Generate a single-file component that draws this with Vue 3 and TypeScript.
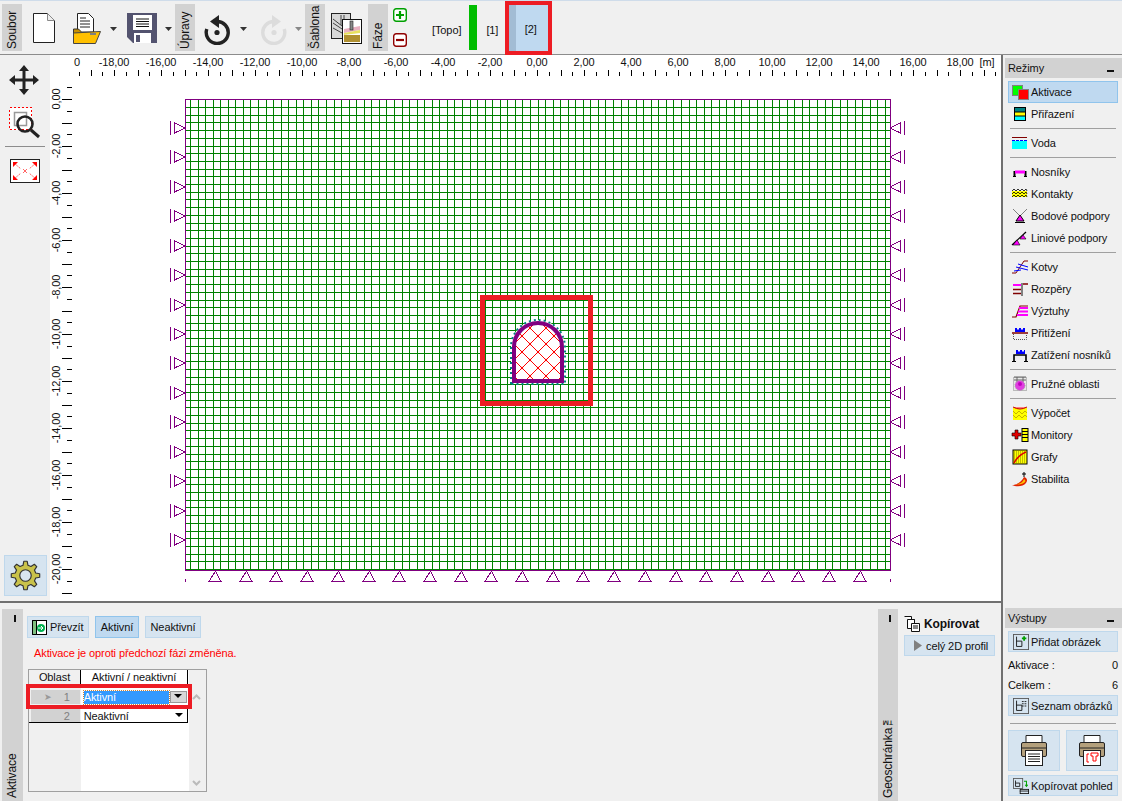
<script setup lang="ts">
interface ModeItem {
  label?: string;
  icon?: string;
  active?: boolean;
}

const modes: ModeItem[] = [
  {
    label: "Aktivace",
    active: true,
    icon: '<rect x="1.5" y="1.5" width="10" height="10" fill="#00ff00" stroke="#808080"/><rect x="7.5" y="5.5" width="10" height="10" fill="#ff0000" stroke="#808080"/>',
  },
  {
    label: "Přiřazení",
    icon: '<rect x="3.5" y="1.5" width="11" height="13" fill="#008080" stroke="#000"/><rect x="4" y="6" width="10" height="4" fill="#ffff00"/><rect x="4" y="10" width="10" height="4" fill="#00ffff"/><path d="M4 10h10M4 6h10" stroke="#000"/>',
  },
  {},
  {
    label: "Voda",
    icon: '<path d="M1 2.500h15" stroke="#800000"/><rect x="1" y="6" width="15" height="8" fill="#00ffff"/><path d="M1 5.500h15" stroke="#0000ff" stroke-dasharray="3 1"/>',
  },
  {},
  {
    label: "Nosníky",
    icon: '<path d="M3.500 12V8h11v4" fill="none" stroke="#000" stroke-width="2"/><rect x="4" y="6.500" width="10" height="3" fill="#ff00ff"/><path d="M2 12.500h3M13 12.500h3" stroke="#000"/>',
  },
  {
    label: "Kontakty",
    icon: '<rect x="1" y="5" width="15" height="6" fill="#ffff00"/><path d="M1 5l2-2 2 2 2-2 2 2 2-2 2 2 2-2 1 2M1 8l2-2 2 2 2-2 2 2 2-2 2 2 2-2 1 2M1 11l2-2 2 2 2-2 2 2 2-2 2 2 2-2 1 2" fill="none" stroke="#000" stroke-width=".8"/>',
  },
  {
    label: "Bodové podpory",
    icon: '<path d="M2 1l7 7M16 1L9 8" stroke="#808080"/><path d="M9 7l4 6H5z" fill="#ff00ff" stroke="#000"/><path d="M4 14.500h10" stroke="#000"/>',
  },
  {
    label: "Liniové podpory",
    icon: '<path d="M1 15L15 2" stroke="#000" stroke-width="1.200"/><path d="M12 5l3 4H9zM6 10l3 5H2z" fill="#ff00ff" stroke="#000" stroke-width=".6"/>',
  },
  {},
  {
    label: "Kotvy",
    icon: '<path d="M1 14h4l8-12h4" fill="none" stroke="#800000"/><path d="M5 8l12 3M7 5l10 3M3 12l7-1" stroke="#0000ff" fill="none"/>',
  },
  {
    label: "Rozpěry",
    icon: '<rect x="2" y="3" width="9" height="2" fill="#ff00ff"/><path d="M2 8.500h8M2 12.500h8M12 3h5" stroke="#800000" stroke-width="1.600"/><rect x="10" y="2" width="2" height="13" fill="#808080"/>',
  },
  {
    label: "Výztuhy",
    icon: '<path d="M1 14h4l4-11h8" fill="none" stroke="#800000" stroke-width="1.200"/><path d="M8 5h9M7 8.500h10M6 12h11" stroke="#ff00ff" stroke-width="1.800"/>',
  },
  {
    label: "Přitížení",
    icon: '<path d="M4 7V3h2v1.500h2V3h2v1.500h2V3h2v4z" fill="#0000ff"/><path d="M1 8h16" stroke="#800000" stroke-width="1.500"/><path d="M2.500 9v5.500h13V9" fill="none" stroke="#555" stroke-dasharray="1 1"/>',
  },
  {
    label: "Zatížení nosníků",
    icon: '<path d="M5 7V3h2v1.500h2V3h2v1.500h2V3h1v4z" fill="#0000ff"/><path d="M3 14V8h12v6" fill="none" stroke="#000" stroke-width="1.600"/><path d="M1 14.500h4M13 14.500h4" stroke="#000"/>',
  },
  {},
  {
    label: "Pružné oblasti",
    icon: '<rect x="2.500" y="1.500" width="13" height="13" fill="#e8e8e8" stroke="#888" stroke-dasharray="1 1"/><path d="M3 1h12M6 1v5M12 1v5M3 4h12" stroke="#666" fill="none"/><ellipse cx="9" cy="9.500" rx="5" ry="5" fill="#e040e0" stroke="#a0a0a0" stroke-dasharray="1 1"/><circle cx="9" cy="8" r="2" fill="#c000c0"/>',
  },
  {},
  {
    label: "Výpočet",
    icon: '<rect x="2" y="3" width="14" height="12" fill="#ffff00"/><path d="M2 6l3 3 3-3 3 3 3-3 2 2M2 10l3 3 3-3 3 3 3-3 2 2" stroke="#a08000" stroke-width=".6" fill="none"/><path d="M2 2q7 4 14 0" fill="#ff8080" stroke="#c00000"/>',
  },
  {
    label: "Monitory",
    icon: '<path d="M3 6h3V3h3v3h3v3H9v3H6V9H3z" fill="#e00000" stroke="#000" stroke-width=".6" transform="translate(-2 0)"/><rect x="11" y="1.500" width="6" height="13" fill="#ffff00" stroke="#000"/><path d="M11 4.500h6M11 7.500h6M11 10.500h6" stroke="#000"/>',
  },
  {
    label: "Grafy",
    icon: '<rect x="2" y="1" width="14" height="14" fill="#ffff00" stroke="#000"/><path d="M3 3h12M3 5h12M3 7h12M3 9h12M3 11h12M3 13h12" stroke="#000" stroke-width=".5" stroke-dasharray="1 1"/><path d="M3 14C6 8 10 5 15 3" fill="none" stroke="#e00000" stroke-width="1.600"/>',
  },
  {
    label: "Stabilita",
    icon: '<path d="M1 14C7 14 11 10 13 6c3 1 4 3 2 6-3 4-10 4-14 2z" fill="#e02000"/><path d="M5 13c4 0 7-2 8-5 1 1 2 2 1 3-2 2-6 3-9 2z" fill="#ffc000"/><path d="M13 6V1M11 3h4" stroke="#000"/>',
  },
];

const X0 = 537;
const Y0 = 99;
const PX_PER_M = 23.5;

function fmt(v: number): string {
  return v.toFixed(2).replace(".", ",").replace("-0,00", "0,00");
}

const topLabels: { x: number; text: string }[] = [];
for (let v = -18; v <= 18; v += 2) {
  topLabels.push({ x: X0 + v * PX_PER_M, text: fmt(v) });
}
const leftLabels: { y: number; text: string }[] = [];
for (let v = 0; v <= 20; v += 2) {
  leftLabels.push({ y: Y0 + v * PX_PER_M, text: fmt(-v) });
}

let topTicks = "";
for (let i = -39; i <= 39; i++) {
  const x = Math.round(X0 + i * 0.5 * PX_PER_M) + 0.5;
  topTicks += `M${x} ${i % 2 === 0 ? 70 : 72}V76`;
}
let leftTicks = "";
for (let i = -1; i <= 42; i++) {
  const y = Math.round(Y0 + i * 0.5 * PX_PER_M) + 0.5;
  leftTicks += `M${i % 2 === 0 ? 62 : 67} ${y}H72`;
}

let meshPath = "";
for (let i = 0; i <= 92; i++) {
  const x = Math.round(190 + (i * 695) / 92) + 0.5;
  meshPath += `M${x} 99V570`;
}
for (let i = 0; i <= 60; i++) {
  const y = Math.round(107 + i * 7.7) + 0.5;
  meshPath += `M185 ${y}H890`;
}

const leftSupports: number[] = [];
for (let i = 0; i < 15; i++) leftSupports.push(Math.round(128 + i * 29.43));
const bottomSupports: number[] = [];
for (let i = 0; i < 22; i++) bottomSupports.push(Math.round(215 + i * 30.7));

// sit liniove oblasti v tunelu
let latticePath = "";
const latticeNodes: { x: number; y: number }[] = [];
for (let c = -10; c <= 10; c++) {
  latticePath += `M${538 + c * 16 - 80} 272L${538 + c * 16 + 120} 472`;
  latticePath += `M${538 + c * 16 + 80} 272L${538 + c * 16 - 120} 472`;
}
for (let r = 0; r < 9; r++) {
  for (let c = -2; c <= 2; c++) {
    latticeNodes.push({ x: 538 + c * 16 + (r % 2 ? 8 : 0), y: 320 + r * 8 });
  }
}

const TUNNEL = "M514 381V347A24 24 0 0 1 562 347V381Z";
const TUNNEL_OUTER = "M511 384V347A27 27 0 0 1 565 347V384Z";

function gearPath(cx: number, cy: number, teeth: number, ro: number, ri: number): string {
  let d = "";
  const step = (Math.PI * 2) / teeth;
  for (let i = 0; i < teeth; i++) {
    const a = i * step - Math.PI / 2;
    for (const [ang, r] of [
      [a - step * 0.3, ri],
      [a - step * 0.15, ro],
      [a + step * 0.15, ro],
      [a + step * 0.3, ri],
    ]) {
      const x = (cx + Math.cos(ang) * r).toFixed(1);
      const y = (cy + Math.sin(ang) * r).toFixed(1);
      d += `${d ? "L" : "M"}${x} ${y}`;
    }
  }
  return d + "Z";
}
const gear = gearPath(21.5, 20.5, 8, 15, 11);
</script>

<template>
  <div class="app">
    <header class="toolbar">
      <div class="group">Soubor</div>
      <svg class="tool t-new" width="22" height="30" viewBox="0 0 22 30">
        <path d="M.5.5h14l7 7v22H.5z" fill="#fff" stroke="#222" />
        <path d="M14.500.5v7h7" fill="#eee" stroke="#888" />
      </svg>
      <svg class="tool t-open" width="28" height="31" viewBox="0 0 28 31">
        <path d="M4.500.5h11l5 5v18h-16z" fill="#fff" stroke="#222" />
        <path d="M7 5h6M7 8h10M7 11h10M7 14h10" stroke="#222" />
        <path d="M.5 16h5l3 3h13v4H.5z" fill="#c89000" stroke="#333" />
        <path d="M.5 30.500V20l27-1.500-5 12z" fill="#ffc000" stroke="#444" />
        <path d="M17 20h6v2h-6z" fill="#808080" />
      </svg>
      <svg class="arrow t-a1" width="7" height="4" viewBox="0 0 7 4"><path d="M0 0h7L3.500 4z" fill="#333" /></svg>
      <svg class="tool t-save" width="30" height="30" viewBox="0 0 30 30">
        <path d="M0 0h30v30H6l-6-6z" fill="#53536f" />
        <rect x="6" y="2" width="19" height="15" fill="#fff" />
        <path d="M9 6h13M9 8.500h13M9 11h13M9 13.500h13" stroke="#111" />
        <rect x="7" y="20" width="17" height="10" fill="#fff" />
        <rect x="9" y="22" width="4" height="7" fill="#53536f" />
      </svg>
      <svg class="arrow t-a2" width="7" height="4" viewBox="0 0 7 4"><path d="M0 0h7L3.500 4z" fill="#333" /></svg>
      <div class="group t-upravy">Úpravy</div>
      <svg class="tool t-undo" width="28" height="30" viewBox="0 0 28 30">
        <path d="M13 6.500A11 11 0 1 1 2.800 14" fill="none" stroke="#222" stroke-width="3.400" />
        <path d="M15 0v13L6 6.500z" fill="#222" />
        <circle cx="13" cy="17.500" r="2.600" fill="#222" />
      </svg>
      <svg class="arrow t-a3" width="7" height="4" viewBox="0 0 7 4"><path d="M0 0h7L3.500 4z" fill="#333" /></svg>
      <svg class="tool t-redo" width="28" height="30" viewBox="0 0 28 30">
        <path d="M15 6.500A11 11 0 1 0 25.200 14" fill="none" stroke="#dcdcdc" stroke-width="3.400" />
        <path d="M13 0v13l9-6.500z" fill="#dcdcdc" />
        <circle cx="15" cy="17.500" r="2.600" fill="#dcdcdc" />
      </svg>
      <svg class="arrow t-a4" width="7" height="4" viewBox="0 0 7 4"><path d="M0 0h7L3.500 4z" fill="#888" /></svg>
      <div class="group t-sablona">Šablona</div>
      <svg class="tool t-template" width="31" height="31" viewBox="0 0 31 31">
        <rect x=".5" y=".5" width="19" height="25" fill="#d8d8d8" stroke="#222" />
        <path d="M2 6l9 7M2 10l9 6M2 15l9 5M10 2v10M13 2v10" stroke="#444" />
        <rect x="11.500" y="6.500" width="19" height="24" fill="#fff" stroke="#111" />
        <path d="M13 16l16-3v4l-16 3z" fill="#e8b0c0" />
        <path d="M13 20l16-3v3l-16 2z" fill="#e8e060" />
        <rect x="13" y="22" width="16" height="7" fill="#b09030" />
        <rect x="19" y="8" width="3" height="9" fill="#888" stroke="#222" stroke-width=".6" />
      </svg>
      <div class="group t-faze">Fáze</div>
      <div class="phase-btns">
        <svg width="14" height="14" viewBox="0 0 14 14">
          <rect x=".7" y=".7" width="12.600" height="12.600" rx="2.500" fill="#fff" stroke="#00a000" stroke-width="1.400" />
          <path d="M7 3v8M3 7h8" stroke="#00a000" stroke-width="2.200" />
        </svg>
        <svg width="14" height="14" viewBox="0 0 14 14">
          <rect x=".7" y=".7" width="12.600" height="12.600" rx="2.500" fill="#fff" stroke="#900000" stroke-width="1.400" />
          <path d="M3 7h8" stroke="#900000" stroke-width="2.200" />
        </svg>
      </div>
      <span class="phase t-topo">[Topo]</span>
      <span class="phase-bar"></span>
      <span class="phase t-one">[1]</span>
      <div class="phase-active">
        <span class="phase-strip"></span>
        <span class="phase-label">[2]</span>
      </div>
    </header>

    <div class="body">
      <div class="main">
        <div class="work">
          <aside class="side-tools">
            <svg class="move" width="30" height="30" viewBox="0 0 30 30">
              <path d="M15 0l5 6h-3.500v7.500H24V10l6 5-6 5v-3.500h-7.500V24H20l-5 6-5-6h3.500v-7.500H6V20l-6-5 6-5v3.500h7.500V6H10z" fill="#222" />
            </svg>
            <svg class="zoom" width="32" height="32" viewBox="0 0 32 32">
              <rect x=".5" y=".5" width="22" height="22" fill="#fff" stroke="#f00" stroke-dasharray="2 2" shape-rendering="crispEdges" />
              <rect x="5.500" y="5.500" width="12" height="13" fill="none" stroke="#999" stroke-width="1.500" />
              <circle cx="16" cy="17" r="7.500" fill="none" stroke="#222" stroke-width="2.600" />
              <path d="M22 23l8 7" stroke="#222" stroke-width="3" />
            </svg>
            <div class="tool-sep"></div>
            <svg class="fit" width="30" height="24" viewBox="0 0 30 24">
              <rect x=".5" y=".5" width="29" height="23" fill="#fff" stroke="#222" />
              <path d="M4 4l7 6M26 4l-7 6M4 20l7-6M26 20l-7-6" stroke="#f66" stroke-dasharray="2 1" />
              <path d="M3 3h5L3 8zM27 3h-5l5 5zM3 21h5l-5-5zM27 21h-5l5-5z" fill="#f00" />
              <path d="M13 10l2 2 2-2M13 14l2-2 2 2" fill="none" stroke="#f66" />
            </svg>
            <button class="gear-btn">
              <svg width="43" height="41" viewBox="0 0 43 41">
                <path :d="gear" fill="#c9c24a" stroke="#333" stroke-width="1.200" stroke-linejoin="round" />
                <circle cx="21.500" cy="20.500" r="6" fill="#d8e5f0" stroke="#333" stroke-width="1.200" />
              </svg>
            </button>
          </aside>

          <div class="canvas">
            <svg width="951" height="546" viewBox="50 55 951 546">
              <g shape-rendering="crispEdges">
                <path :d="topTicks" stroke="#000" fill="none" />
                <path :d="leftTicks" stroke="#000" fill="none" />
                <path :d="meshPath" stroke="#008000" fill="none" />
                <rect x="185.500" y="99.500" width="705" height="471" fill="none" stroke="#800080" />
                <path d="M185 570.500H891" stroke="#800080" fill="none" />
              </g>
              <text class="rt" x="77" y="66" text-anchor="middle">0</text>
              <text
                v-for="l in topLabels"
                :key="l.text"
                class="rt"
                :x="l.x"
                y="66"
                text-anchor="middle"
              >{{ l.text }}</text>
              <text class="rt" x="987" y="66" text-anchor="middle">[m]</text>
              <text
                v-for="l in leftLabels"
                :key="l.text"
                class="rt"
                text-anchor="middle"
                :transform="`translate(60 ${l.y}) rotate(-90)`"
              >{{ l.text }}</text>

              <g fill="none" stroke="#800080" shape-rendering="crispEdges">
                <g v-for="y in leftSupports" :key="y">
                  <path :d="`M170.500 ${y - 7}V${y + 7}`" />
                  <path :d="`M174.500 ${y - 5}V${y + 5}L185 ${y}Z`" />
                  <path :d="`M904.500 ${y - 7}V${y + 7}`" />
                  <path :d="`M900.500 ${y - 5}V${y + 5}L890 ${y}Z`" />
                </g>
                <path
                  v-for="x in bottomSupports"
                  :key="x"
                  :d="`M${x + 0.5} 571L${x + 6} 581.500H${x - 6}Z`"
                />
                <path d="M185.500 579v3M890.500 579v3" />
              </g>

              <clipPath id="tunnel-clip"><path :d="TUNNEL" /></clipPath>
              <path :d="TUNNEL_OUTER" fill="#fff" stroke="#008080" stroke-width="2" stroke-dasharray="2 3" />
              <path :d="TUNNEL" fill="#fff" />
              <g clip-path="url(#tunnel-clip)">
                <path :d="latticePath" stroke="#ff0000" fill="none" />
                <circle v-for="n in latticeNodes" :key="`${n.x}-${n.y}`" :cx="n.x" :cy="n.y" r="1.200" fill="#ff0000" />
              </g>
              <path :d="TUNNEL" fill="none" stroke="#800080" stroke-width="4" />
              <rect x="482.500" y="297.500" width="108" height="106" fill="none" stroke="#ed1c24" stroke-width="5" />
            </svg>
          </div>
        </div>

        <section class="bottom">
          <div class="vtab t-aktivace">
            <span class="pin"></span>
            <span class="vtab-text">Aktivace</span>
          </div>
          <div class="activation">
            <div class="btn-row">
              <button class="btn b-take">
                <svg width="15" height="15" viewBox="0 0 15 15">
                  <rect x=".5" y=".5" width="14" height="14" fill="#fff" stroke="#000" />
                  <path d="M.5.500h4v14h-4z" fill="#80c080" stroke="#000" />
                  <circle cx="9" cy="8" r="4" fill="#00b050" />
                  <path d="M6 8h5M9 6l2 2-2 2" stroke="#fff" fill="none" />
                </svg>
                Převzít
              </button>
              <button class="btn b-on selected">Aktivní</button>
              <button class="btn b-off">Neaktivní</button>
            </div>
            <p class="warn">Aktivace je oproti předchozí fázi změněna.</p>
            <div class="table">
              <div class="thead">
                <div class="c-area">Oblast</div>
                <div class="c-state">Aktivní / neaktivní</div>
              </div>
              <div class="tr tr-first">
                <div class="rowhead"><span class="row-mark">➤</span>1</div>
                <div class="cell">
                  <span class="cell-value">Aktivní</span>
                  <span class="combo"></span>
                </div>
              </div>
              <div class="tr tr-last">
                <div class="rowhead">2</div>
                <div class="cell cell-plain">
                  <span>Neaktivní</span>
                  <span class="combo-arrow"></span>
                </div>
              </div>
              <svg class="scroll scroll-up" width="9" height="6" viewBox="0 0 9 6"><path d="M1 5l3.500-3.500L8 5" fill="none" stroke="#bbb" stroke-width="2" /></svg>
              <svg class="scroll scroll-down" width="9" height="6" viewBox="0 0 9 6"><path d="M1 1l3.500 3.500L8 1" fill="none" stroke="#bbb" stroke-width="2" /></svg>
              <div class="row-highlight"></div>
            </div>
          </div>
          <div class="vtab t-geo">
            <span class="pin"></span>
            <span class="vtab-text">Geoschránka™</span>
          </div>
          <div class="copy">
            <div class="copy-title">
              <svg width="16" height="16" viewBox="0 0 16 16">
                <path d="M.5.500h7v3h3v3" fill="#fff" stroke="#111" />
                <path d="M3.500 3.500h7v9h-7z" fill="#fff" stroke="#111" />
                <path d="M7.500 7.500h8v8h-8z" fill="#fff" stroke="#111" />
                <path d="M9 10h5M9 12h5" stroke="#111" />
              </svg>
              <b>Kopírovat</b>
            </div>
            <button class="btn copy-btn">
              <svg width="8" height="11" viewBox="0 0 8 11"><path d="M0 0l8 5.500L0 11z" fill="#808080" /></svg>
              celý 2D profil
            </button>
          </div>
        </section>
      </div>

      <aside class="right">
        <div class="panel-head"><span>Režimy</span><i class="dash"></i></div>
        <nav class="modes">
          <template v-for="(m, i) in modes" :key="i">
            <div v-if="m.label" class="mode" :class="{ active: m.active }">
              <svg width="18" height="16" viewBox="0 0 18 16" v-html="m.icon"></svg>
              <span>{{ m.label }}</span>
            </div>
            <div v-else class="sep"></div>
          </template>
        </nav>
        <div class="spacer"></div>
        <div class="panel-head"><span>Výstupy</span><i class="dash"></i></div>
        <div class="outputs">
          <button class="btn out-btn">
            <svg width="16" height="16" viewBox="0 0 18 18">
              <rect x=".5" y=".5" width="17" height="17" fill="none" stroke="#555" />
              <path d="M4 3v11h6V8H4" fill="none" stroke="#111" />
              <path d="M10 5h5M12.500 2.500v5" stroke="#00a000" stroke-width="2" />
            </svg>
            Přidat obrázek
          </button>
          <div class="stat stat-first"><span>Aktivace :</span><span>0</span></div>
          <div class="stat"><span>Celkem :</span><span>6</span></div>
          <button class="btn out-btn">
            <svg width="16" height="16" viewBox="0 0 18 18">
              <rect x=".5" y=".5" width="17" height="17" fill="none" stroke="#555" />
              <path d="M4 3v11h6V8H4" fill="none" stroke="#111" />
              <path d="M10 4h5M10 6.500h5M10 9h5" stroke="#111" stroke-dasharray="2 1" />
            </svg>
            Seznam obrázků
          </button>
          <div class="out-sep"></div>
          <div class="print-row">
            <button class="btn print-btn">
              <svg width="26" height="31" viewBox="0 0 26 31">
                <path d="M5 .5h16v8H5z" fill="#fff" stroke="#222" />
                <rect x=".5" y="7.500" width="25" height="14" rx="1.500" fill="#b4a07c" stroke="#222" />
                <path d="M1 13h24" stroke="#222" />
                <rect x="4.500" y="15.500" width="17" height="15" fill="#fff" stroke="#222" />
                <path d="M7 19h12M7 21.500h12M7 24h12M7 26.500h12" stroke="#222" />
              </svg>
            </button>
            <button class="btn print-btn">
              <svg width="26" height="31" viewBox="0 0 26 31">
                <path d="M5 .5h16v8H5z" fill="#fff" stroke="#222" />
                <rect x=".5" y="7.500" width="25" height="14" rx="1.500" fill="#b4a07c" stroke="#222" />
                <path d="M1 13h24" stroke="#222" />
                <rect x="4.500" y="15.500" width="17" height="15" fill="#fff" stroke="#222" />
                <path d="M8 19v8M8 19h2M8 27h2M12 18h7v3h-2v5h-3v-5h-2z" fill="none" stroke="#f00" />
              </svg>
            </button>
          </div>
          <button class="btn out-btn">
            <svg width="16" height="16" viewBox="0 0 19 19">
              <rect x=".5" y=".5" width="11" height="12" fill="none" stroke="#555" />
              <path d="M3 3v7h5V6H3" fill="none" stroke="#111" />
              <path d="M13 4h3v5M14.500 8l1.500 2 1.500-2" fill="none" stroke="#00a000" stroke-width="1.200" />
              <rect x="8.500" y="13.500" width="10" height="5" fill="none" stroke="#111" />
              <path d="M8 15.500h11" stroke="#111" />
            </svg>
            Kopírovat pohled
          </button>
        </div>
      </aside>
    </div>
  </div>
</template>

<style>
html,
body {
  margin: 0;
  background: #f0f0f0;
}
</style>

<style scoped>
.app {
  width: 1122px;
  height: 801px;
  overflow: hidden;
  background: #f0f0f0;
  color: #111;
  font: 11px "Liberation Sans", Arial, sans-serif;
  letter-spacing: -0.1px;
}

.toolbar {
  height: 52px;
  padding: 1px 0 0 2px;
  display: flex;
  align-items: flex-start;
  border-top: 1px solid #cfdcea;
  border-bottom: 1px solid #8c8c8c;
}

.group {
  width: 20px;
  height: 47px;
  margin-top: 2px;
  padding-top: 2px;
  box-sizing: border-box;
  flex: none;
  background: #d2d2d2;
  writing-mode: vertical-rl;
  transform: rotate(180deg);
  font-size: 12px;
  line-height: 20px;
  text-align: left;
}

.tool,
.arrow {
  flex: none;
}
.arrow {
  margin-top: 25px;
}
.t-new { margin: 11px 0 0 11px; }
.t-open { margin: 11px 0 0 18px; }
.t-a1 { margin-left: 9px; }
.t-save { margin: 11px 0 0 10px; }
.t-a2 { margin-left: 8px; }
.t-upravy { margin-left: 3px; }
.t-undo { margin: 13px 0 0 9px; }
.t-a3 { margin-left: 8px; }
.t-redo { margin: 13px 0 0 12px; }
.t-a4 { margin-left: 8px; }
.t-sablona { margin-left: 3px; }
.t-template { margin: 11px 0 0 6px; }
.t-faze { margin-left: 6px; }

.phase-btns {
  margin: 6px 0 0 5px;
  display: flex;
  flex-direction: column;
  gap: 11px;
}

.phase {
  margin-top: 21px;
  line-height: 14px;
}
.t-topo { margin-left: 25px; }
.t-one { margin-left: 9px; }

.phase-bar {
  width: 8px;
  height: 45px;
  margin: 3px 0 0 8px;
  background: #00bd00;
}

.phase-active {
  width: 39px;
  height: 46px;
  margin: -1px 0 0 7px;
  border: 4px solid #ed1c24;
  display: flex;
  background: #bfd9f0;
}
.phase-strip {
  width: 7px;
  background: #a2bcd4;
}
.phase-label {
  flex: 1;
  text-align: center;
  line-height: 48px;
  padding-right: 3px;
}

.body {
  display: flex;
  height: 747px;
}

.main {
  width: 1001px;
  display: flex;
  flex-direction: column;
  border-right: 2px solid #707070;
  flex: none;
}

.work {
  height: 546px;
  display: flex;
}

.side-tools {
  width: 50px;
  flex: none;
  display: flex;
  flex-direction: column;
  align-items: center;
}
.move { margin: 10px 0 0 -2px; }
.zoom { margin: 12px 0 0 -1px; }
.tool-sep {
  width: 40px;
  height: 1px;
  margin-top: 7px;
  background: #8c8c8c;
}
.fit { margin-top: 12px; }

.gear-btn {
  width: 43px;
  height: 41px;
  margin-top: auto;
  margin-bottom: 5px;
  padding: 0;
  display: flex;
  align-items: center;
  justify-content: center;
  background: #d6e4f0;
  border: 1px solid #bfd8ec;
}

.canvas {
  flex: 1;
  background: #fff;
}
.canvas svg {
  display: block;
}
.rt {
  font: 11px "Liberation Sans", Arial, sans-serif;
  fill: #111;
}

.bottom {
  flex: 1;
  display: flex;
  border-top: 2px solid #707070;
  min-height: 0;
}

.vtab {
  position: relative;
  flex: none;
  width: 21px;
  margin-top: 6px;
  background: #d2d2d2;
  writing-mode: vertical-rl;
  transform: rotate(180deg);
  line-height: 21px;
  font-size: 12px;
}
.t-aktivace { margin-left: 2px; }
.vtab-text {
  display: block;
  padding-top: 4px;
}
.pin {
  position: absolute;
  bottom: 6px;
  left: 7px;
  width: 2px;
  height: 7px;
  background: #111;
}

.activation {
  width: 855px;
  flex: none;
  padding: 12px 0 0 5px;
  box-sizing: border-box;
}
.btn-row {
  display: flex;
  gap: 6px;
  margin-top: 1px;
}

.btn {
  height: 22px;
  padding: 0 4px;
  display: flex;
  align-items: center;
  justify-content: flex-start;
  gap: 3px;
  background: #d6e4f0;
  border: 1px solid #bfd8ec;
  color: #111;
  font: 11px "Liberation Sans", Arial, sans-serif;
  letter-spacing: -0.1px;
  white-space: nowrap;
  box-sizing: border-box;
}
.btn.selected {
  background: #bfd9f0;
  border-color: #90c4ec;
}
.b-take { width: 62px; margin-left: -1px; }
.b-on { width: 44px; justify-content: center; }
.b-off { width: 56px; justify-content: center; }

.warn {
  margin: 8px 0 0 6px;
  color: #ff0000;
  line-height: 14px;
}

.table {
  position: relative;
  width: 179px;
  height: 123px;
  margin-top: 9px;
  box-sizing: border-box;
  border: 1px solid #a0a0a0;
  background: linear-gradient(90deg, #f0f0f0 52px, #fff 52px, #fff 160px, #f0f0f0 160px);
}
.thead {
  height: 15px;
  display: flex;
  line-height: 15px;
  text-align: center;
}
.c-area {
  width: 52px;
  border-right: 1px solid #000;
  box-sizing: border-box;
}
.c-state {
  width: 107px;
  border-right: 1px solid #000;
  box-sizing: border-box;
}
.tr {
  display: flex;
  width: 159px;
  box-sizing: border-box;
}
.tr-first {
  height: 19px;
  padding-top: 5px;
}
.tr-last {
  height: 19px;
  padding-top: 5px;
  border-bottom: 1px solid #000;
}
.rowhead {
  position: relative;
  width: 49px;
  margin: 0 1px 0 2px;
  background: #d2d2d2;
  text-align: right;
  padding-right: 10px;
  box-sizing: border-box;
  color: #808080;
  line-height: 14px;
}
.row-mark {
  position: absolute;
  left: 13px;
  top: 0;
  color: #999;
  font-size: 9px;
}
.cell {
  width: 104px;
  margin-left: 3px;
  display: flex;
  align-items: center;
  border-right: 1px solid transparent;
}
.tr-last .cell {
  border-right-color: #000;
}
.cell-value {
  flex: 1;
  height: 13px;
  line-height: 13px;
  background: #3399ff;
  color: #fff;
  outline: 1px dotted #d08030;
}
.combo {
  position: relative;
  width: 15px;
  height: 10px;
  margin-left: 1px;
  background: #d8d8d8;
  border: 1px solid #999;
}
.combo::after,
.combo-arrow::after {
  content: "";
  position: absolute;
  left: 3px;
  top: 2px;
  border: 4px solid transparent;
  border-top: 4px solid #000;
  border-bottom: 0;
}
.cell-plain {
  justify-content: space-between;
}
.combo-arrow {
  position: relative;
  width: 15px;
  height: 10px;
}
.scroll {
  position: absolute;
  left: 163px;
}
.scroll-up { top: 24px; }
.scroll-down { top: 110px; }
.row-highlight {
  position: absolute;
  left: -3px;
  top: 14px;
  width: 166px;
  height: 25px;
  box-sizing: border-box;
  border: 4px solid #ed1c24;
}

.t-geo {
  width: 20px;
}
.copy {
  padding: 13px 0 0 6px;
  flex: 1;
}
.copy-title {
  display: flex;
  align-items: center;
  gap: 4px;
  height: 16px;
  font-size: 12px;
}
.copy-btn {
  width: 91px;
  height: 21px;
  margin-top: 3px;
  padding-left: 9px;
  gap: 4px;
}

.right {
  width: 119px;
  flex: none;
  display: flex;
  flex-direction: column;
  padding: 3px 0 0 2px;
  box-sizing: border-box;
}
.panel-head {
  height: 20px;
  flex: none;
  display: flex;
  align-items: center;
  justify-content: space-between;
  padding: 0 8px 0 3px;
  background: #d2d2d2;
}
.dash {
  width: 7px;
  height: 2px;
  margin-top: 6px;
  background: #111;
}
.modes {
  margin: 3px 4px 0 3px;
}
.mode {
  height: 22px;
  box-sizing: border-box;
  display: flex;
  align-items: center;
  gap: 2px;
  padding-left: 2px;
  border: 1px solid transparent;
}
.mode.active {
  background: #bfd9f0;
  border-color: #90c4ec;
}
.sep {
  height: 1px;
  margin: 3px 2px;
  background: #a0a0a0;
}
.spacer {
  height: 118px;
  flex: none;
}
.outputs {
  margin: 3px 4px 0 3px;
  display: flex;
  flex-direction: column;
}
.out-btn {
  width: 110px;
  height: 21px;
  gap: 2px;
}
.stat {
  height: 20px;
  line-height: 20px;
  display: flex;
  justify-content: space-between;
}
.stat-first {
  margin-top: 3px;
}
.out-sep {
  height: 1px;
  margin: 7px 2px 6px;
  background: #a0a0a0;
}
.print-row {
  display: flex;
  gap: 6px;
  margin-bottom: 4px;
}
.print-btn {
  width: 52px;
  height: 41px;
  justify-content: center;
  padding: 0;
}
</style>
